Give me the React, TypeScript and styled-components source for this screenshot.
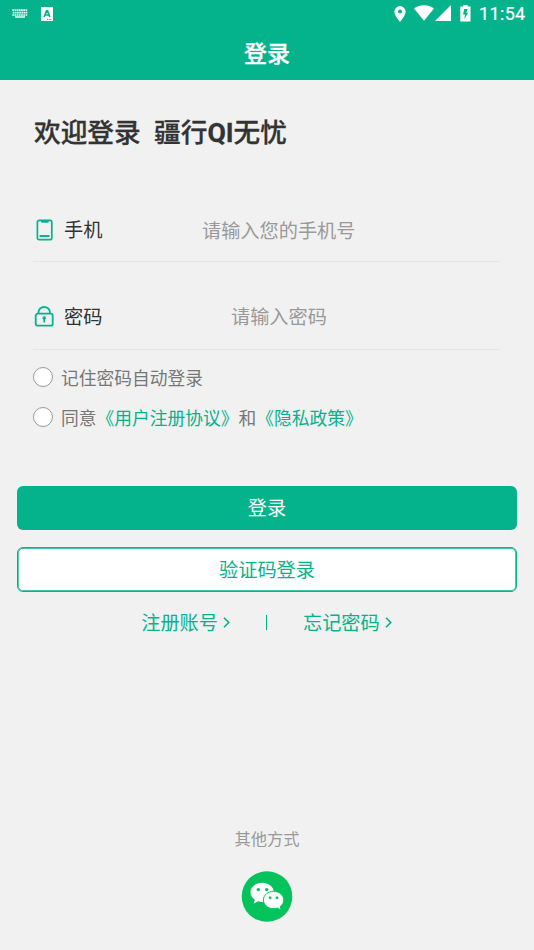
import React from "react";
import styled, { createGlobalStyle } from "styled-components";

const GREEN = "#04b38c";

const GlobalStyle = createGlobalStyle`
  *, *::before, *::after { box-sizing: border-box; }
  body {
    margin: 0;
    background: #f1f1f1;
    font-family: Roboto, "Noto Sans CJK SC", sans-serif;
  }
  button, input { font-family: inherit; }
`;

const Screen = styled.div`
  display: flex;
  flex-direction: column;
  width: 100%;
  height: 950px;
  overflow: hidden;
  background: #f1f1f1;
`;

const Header = styled.header`
  height: 80px;
  background: ${GREEN};
  color: #fff;
`;

const StatusBar = styled.div`
  display: flex;
  align-items: center;
  justify-content: space-between;
  height: 27px;
  padding: 0 9px 0 12px;
`;

const StatusGroup = styled.div`
  display: flex;
  align-items: center;
  svg { display: block; }
`;

const StatusIcons = styled(StatusGroup)<{ $gap: number }>`
  gap: ${(p) => p.$gap}px;
`;

const Wireless = styled(StatusGroup)`
  gap: 1px;
  margin: 0 2px 1px 1px;
`;

const Clock = styled.span`
  width: 46px;
  margin-left: 8px;
  font-size: 18px;
  line-height: 27px;
  letter-spacing: 0.35px;
  white-space: nowrap;
  -webkit-text-stroke: 0.2px #fff;
`;

const Title = styled.h1`
  margin: 0;
  height: 53px;
  padding-top: 1px;
  font-size: 23px;
  font-weight: 500;
  line-height: 53px;
  text-align: center;
  -webkit-text-stroke: 0.3px #fff;
`;

const Form = styled.main`
  padding: 0 34px 0 33px;
`;

const Welcome = styled.h2`
  margin: 0;
  padding: 33px 0 0 1px;
  height: 119px;
  font-size: 26.7px;
  font-weight: 500;
  line-height: 40px;
  color: #333;
  white-space: pre;
  -webkit-text-stroke: 0.3px #333;
`;

const Latin = styled.span`
  font-weight: 700;
`;

const Field = styled.label<{ $height: number; $top?: number }>`
  display: flex;
  align-items: center;
  height: ${(p) => p.$height}px;
  padding-top: ${(p) => p.$top ?? 0}px;
  border-bottom: 1px solid #e5e5e5;
  font-size: 19.2px;
  color: #333;
  svg { display: block; flex: none; }
`;

const FieldName = styled.span`
  flex: none;
  width: 105px;
  margin-left: 9px;
  padding-top: 2px;
  line-height: 28px;
`;

const FieldInput = styled.input<{ $inset: number }>`
  flex: 1;
  min-width: 0;
  height: 30px;
  padding: 2px 0 0 ${(p) => p.$inset}px;
  border: 0;
  outline: 0;
  background: transparent;
  font-size: 19.2px;
  color: #333;
  &::placeholder { color: #999; opacity: 1; }
`;

const Choices = styled.div`
  padding-top: 7px;
`;

const Choice = styled.div`
  display: flex;
  align-items: center;
  gap: 8px;
  height: 40px;
  font-size: 17.75px;
  line-height: 26px;
  color: #777;
  white-space: nowrap;
`;

const Radio = styled.span`
  flex: none;
  width: 20px;
  height: 20px;
  border: 1px solid #999;
  border-radius: 50%;
  background: #fff;
`;

const ChoiceText = styled.span`
  padding-top: 4px;
`;

const Agreement = styled.a`
  color: ${GREEN};
`;

const Actions = styled.div`
  display: flex;
  flex-direction: column;
  gap: 17px;
  padding: 48.5px 17px 0;
`;

const Button = styled.button<{ $outlined?: boolean }>`
  height: 44.5px;
  padding: ${(p) => (p.$outlined ? 3 : 2)}px 0 0;
  border: ${(p) => (p.$outlined ? 1 : 0)}px solid ${GREEN};
  border-radius: 6px;
  background: ${(p) => (p.$outlined ? "#fff" : GREEN)};
  color: ${(p) => (p.$outlined ? GREEN : "#fff")};
  font-size: 19.2px;
  line-height: 28px;
  box-shadow: ${(p) => (p.$outlined ? `inset 0 0 0 0.7px ${GREEN}` : "none")};
`;

const Links = styled.nav`
  display: flex;
  align-items: center;
  justify-content: center;
  height: 28px;
  margin-top: 17px;
  font-size: 19.2px;
  line-height: 28px;
  color: ${GREEN};
`;

const TextLink = styled.a`
  display: flex;
  align-items: center;
  gap: 4px;
  svg { display: block; }
`;

const LinkText = styled.span`
  padding-top: 3px;
`;

const Divider = styled.span`
  width: 1px;
  height: 15px;
  margin: 0 36px 0 35px;
  background: ${GREEN};
`;

const Others = styled.footer`
  display: flex;
  flex-direction: column;
  align-items: center;
  gap: 18px;
  margin-top: auto;
  padding-bottom: 28px;
  font-size: 16.3px;
  line-height: 24px;
  color: #999;
  svg { display: block; }
`;

const KeyboardIcon = () => (
  <svg width="16" height="9" viewBox="0 0 16 9" stroke="#e5fff8" fill="none">
    <path d="M.3 1.2h15.4M.7 3.7h14.6M.3 6h15.4" strokeWidth="1.7" strokeDasharray="1.7 .5" />
    <path d="M3 8h10" strokeWidth="1.5" />
  </svg>
);

const LanguageIcon = () => (
  <svg width="12" height="14" viewBox="0 0 12 14">
    <path fill="#fff" d="M0 0h12v14H0z" />
    <path d="M3.2 10 5.5 3.9h1L8.8 10M4.1 8h3.8" fill="none" stroke={GREEN} strokeWidth="1.7" />
    <path d="M6 12.4h5" stroke={GREEN} strokeDasharray="1 .7" />
  </svg>
);

const PinIcon = () => (
  <svg width="12" height="16" viewBox="0 0 12 16">
    <path fill="#fff" fillRule="evenodd" d="M6 0a5.6 5.6 0 0 0-5.6 5.6C.4 9.8 6 16 6 16s5.6-6.2 5.6-10.4A5.6 5.6 0 0 0 6 0Zm0 3.6a2 2 0 1 1 0 4 2 2 0 0 1 0-4Z" />
  </svg>
);

const WifiIcon = () => (
  <svg width="20" height="16" viewBox="0 0 20 16">
    <path fill="#fff" d="M0 3.4C6-.9 14-.9 20 3.4L10 15.700Z" />
  </svg>
);

const SignalIcon = () => (
  <svg width="16" height="16" viewBox="0 0 16 16">
    <path fill="#fff" d="M0 16 16 0v16Z" />
  </svg>
);

const BatteryIcon = () => (
  <svg width="11" height="17" viewBox="0 0 11 17">
    <path fill="#fff" d="M3.3 0h4.400v1.500H10.500v15H.3v-15h3Z" />
    <path fill={GREEN} d="M7.600 4H4.200L3 9.500h2L4.200 14 8.200 7.800H6.300Z" />
  </svg>
);

const PhoneIcon = () => (
  <svg width="22" height="22" viewBox="0 0 22 22" fill="none" stroke={GREEN}>
    <rect x="4.400" y="1.300" width="14.400" height="19.400" rx="1.800" strokeWidth="1.700" />
    <path d="M8 1h7.600v1.500a1.200 1.200 0 0 1-1.200 1.200H9.200A1.200 1.200 0 0 1 8 2.500Z" fill={GREEN} stroke="none" />
    <path d="M7.300 17h8.500" strokeWidth="1.800" strokeLinecap="round" />
  </svg>
);

const LockIcon = () => (
  <svg width="22" height="22" viewBox="0 0 22 22" fill="none" stroke={GREEN} strokeWidth="1.800">
    <rect x="2.700" y="7.700" width="17" height="12" rx="2" />
    <path d="M5.500 7.500V6a5.700 5 0 0 1 11.400 0v1.500" />
    <circle cx="11.200" cy="12" r="1.800" fill={GREEN} stroke="none" />
    <path d="M11.200 12v4.500" strokeWidth="1.600" />
  </svg>
);

const Chevron = () => (
  <svg width="9" height="12" viewBox="0 0 9 12" fill="none" stroke={GREEN} strokeWidth="1.600">
    <path d="m2 .8 4.700 4.700L2 10.200" />
  </svg>
);

const WechatIcon = () => (
  <svg width="52" height="52" viewBox="0 0 52 52">
    <circle cx="26" cy="26.500" r="25.300" fill="#04c35c" />
    <path fill="#fff" d="M21.200 12.800C14.700 12.800 9.500 17 9.500 22.300c0 3 1.700 5.600 4.400 7.400l-1.200 3.900 4.500-2.300c1.300.4 2.600.6 4 .6 6.400 0 11.700-4.200 11.700-9.500s-5.300-9.600-11.700-9.600Z" />
    <path fill="#fff" stroke="#04c35c" strokeWidth="1" d="M32.600 21.300c5.600 0 10.200 3.900 10.200 8.700 0 2.700-1.400 5-3.600 6.600l1 3.500-3.900-2a12 12 0 0 1-3.700.6c-5.600 0-10.200-3.900-10.200-8.700s4.600-8.700 10.200-8.700Z" />
    <g fill="#04c35c">
      <circle cx="17.300" cy="19.600" r="1.700" />
      <circle cx="25.700" cy="19.600" r="1.700" />
      <circle cx="29.200" cy="27.800" r="1.400" />
      <circle cx="36" cy="27.800" r="1.400" />
    </g>
  </svg>
);

export default function App() {
  return (
    <Screen>
      <GlobalStyle />
      <Header>
        <StatusBar>
          <StatusIcons $gap={13}>
            <KeyboardIcon />
            <LanguageIcon />
          </StatusIcons>
          <StatusGroup>
            <StatusIcons $gap={7}>
              <PinIcon />
              <Wireless>
                <WifiIcon />
                <SignalIcon />
              </Wireless>
              <BatteryIcon />
            </StatusIcons>
            <Clock>11:54</Clock>
          </StatusGroup>
        </StatusBar>
        <Title>登录</Title>
      </Header>
      <Form>
        <Welcome>
          {"欢迎登录  疆行"}<Latin>QI</Latin>无忧
        </Welcome>
        <Field $height={63}>
          <PhoneIcon />
          <FieldName>手机</FieldName>
          <FieldInput $inset={33} type="tel" placeholder="请输入您的手机号" />
        </Field>
        <Field $height={88} $top={22}>
          <LockIcon />
          <FieldName>密码</FieldName>
          <FieldInput $inset={62} type="password" placeholder="请输入密码" />
        </Field>
        <Choices>
          <Choice>
            <Radio />
            <ChoiceText>记住密码自动登录</ChoiceText>
          </Choice>
          <Choice>
            <Radio />
            <ChoiceText>
              同意<Agreement>《用户注册协议》</Agreement>和<Agreement>《隐私政策》</Agreement>
            </ChoiceText>
          </Choice>
        </Choices>
      </Form>
      <Actions>
        <Button>登录</Button>
        <Button $outlined>验证码登录</Button>
      </Actions>
      <Links>
        <TextLink><LinkText>注册账号</LinkText><Chevron /></TextLink>
        <Divider />
        <TextLink><LinkText>忘记密码</LinkText><Chevron /></TextLink>
      </Links>
      <Others>
        <span>其他方式</span>
        <WechatIcon />
      </Others>
    </Screen>
  );
}
